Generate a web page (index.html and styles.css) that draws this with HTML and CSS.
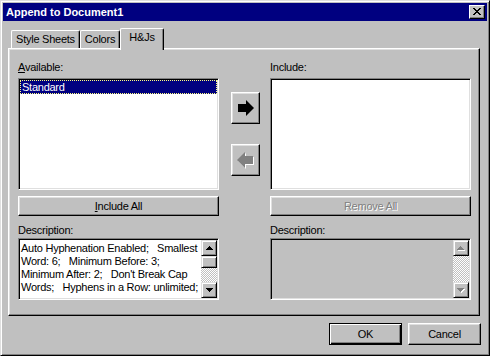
FILE: index.html
```html
<!DOCTYPE html>
<html lang="en">
<head>
    <meta charset="UTF-8">
    <title>Append to Document1</title>
    <link rel="stylesheet" href="styles.css">
</head>
<body>
<div class="window">
    <div class="titlebar">
        <span class="title">Append to Document1</span>
        <div class="close">
            <svg width="8" height="7" viewBox="0 0 8 7"><path fill="#000" d="M0 0h2v1H0zM6 0h2v1H6zM1 1h2v1H1zM5 1h2v1H5zM2 2h4v1H2zM3 3h2v1H3zM2 4h4v1H2zM1 5h2v1H1zM5 5h2v1H5zM0 6h2v1H0zM6 6h2v1H6z"/></svg>
        </div>
    </div>

    <div class="tabs">
        <div class="tab tab-styles">Style Sheets</div>
        <div class="tab tab-colors">Colors</div>
        <div class="tab tab-hj active">H&amp;Js</div>
    </div>

    <div class="panel">
        <div class="label"><u>A</u>vailable:</div>
        <div></div>
        <div class="label">Include:</div>

        <div class="listbox">
            <div class="item selected">Standard</div>
        </div>
        <div class="movers">
            <div class="btn mover">
                <svg width="16" height="16" viewBox="0 0 16 16"><polygon fill="#000" points="0,4 8,4 8,0 16,8 8,16 8,12 0,12"/></svg>
            </div>
            <div class="btn mover">
                <svg width="17" height="17" viewBox="0 0 17 17">
                    <polygon fill="#fff" points="17,5 9,5 9,1 1,9 9,17 9,13 17,13"/>
                    <polygon fill="#808080" points="16,4 8,4 8,0 0,8 8,16 8,12 16,12"/>
                </svg>
            </div>
        </div>
        <div class="listbox"></div>

        <div class="btn wide"><u>I</u>nclude All</div>
        <div></div>
        <div class="btn wide disabled">Remove All</div>

        <div class="label desc-label">Description:</div>
        <div></div>
        <div class="label desc-label">Description:</div>

        <div class="descbox">
            <div class="desctext">Auto Hyphenation Enabled;   Smallest
Word: 6;   Minimum Before: 3;
Minimum After: 2;   Don't Break Cap
Words;   Hyphens in a Row: unlimited;</div>
            <div class="scrollbar">
                <div class="sbtn">
                    <svg width="7" height="4" viewBox="0 0 7 4"><path fill="#000" d="M3 0h1v1H3zM2 1h3v1H2zM1 2h5v1H1zM0 3h7v1H0z"/></svg>
                </div>
                <div class="sbtn thumb"></div>
                <div class="track"></div>
                <div class="sbtn">
                    <svg width="7" height="4" viewBox="0 0 7 4"><path fill="#000" d="M0 0h7v1H0zM1 1h5v1H1zM2 2h3v1H2zM3 3h1v1H3z"/></svg>
                </div>
            </div>
        </div>
        <div></div>
        <div class="descbox disabled">
            <div class="desctext"></div>
            <div class="scrollbar">
                <div class="sbtn">
                    <svg width="8" height="5" viewBox="0 0 8 5"><path fill="#fff" d="M4 1h1v1H4zM3 2h3v1H3zM2 3h5v1H2zM1 4h7v1H1z"/><path fill="#808080" d="M3 0h1v1H3zM2 1h3v1H2zM1 2h5v1H1zM0 3h7v1H0z"/></svg>
                </div>
                <div class="track"></div>
                <div class="sbtn">
                    <svg width="8" height="5" viewBox="0 0 8 5"><path fill="#fff" d="M1 1h7v1H1zM2 2h5v1H2zM3 3h3v1H3zM4 4h1v1H4z"/><path fill="#808080" d="M0 0h7v1H0zM1 1h5v1H1zM2 2h3v1H2zM3 3h1v1H3z"/></svg>
                </div>
            </div>
        </div>
    </div>

    <div class="footer">
        <div class="btn action default">OK</div>
        <div class="btn action">Cancel</div>
    </div>
</div>
</body>
</html>
```

FILE: styles.css
```css
body{
    margin: 0;
    font-family: "Liberation Sans", Arial, sans-serif;
    font-size: 11px;
    letter-spacing: -0.25px;
    color: #000;
}
.window{
    width: 490px;
    height: 356px;
    box-sizing: border-box;
    background-color: #c0c0c0;
    border: 1px solid;
    border-color: #dfdfdf #000 #000 #dfdfdf;
    box-shadow: inset 1px 1px #fff, inset -1px -1px #808080;
    padding: 2px;
}
.titlebar{
    height: 18px;
    background-color: #000080;
    display: flex;
    align-items: center;
    justify-content: space-between;
    padding: 0 2px 0 3px;
}
.title{
    color: white;
    font-weight: bold;
    letter-spacing: 0;
}
.close{
    width: 16px;
    height: 14px;
    box-sizing: border-box;
    background-color: #c0c0c0;
    border: 1px solid;
    border-color: #fff #000 #000 #fff;
    box-shadow: inset -1px -1px #808080;
    display: flex;
    align-items: center;
    justify-content: center;
    padding: 0 1px 1px 0;
}

/* tabs */
.tabs{
    display: flex;
    align-items: flex-end;
    height: 20px;
    margin-top: 7px;
    padding-left: 8px;
}
.tab{
    height: 18px;
    box-sizing: border-box;
    border: 1px solid;
    border-color: #fff #000 transparent #fff;
    border-bottom: none;
    border-radius: 2px 2px 0 0;
    box-shadow: inset -1px 0 #808080;
    display: flex;
    align-items: center;
    justify-content: center;
    padding-bottom: 1px;
}
.tab-styles{ width: 69px; }
.tab-colors{ width: 40px; }
.tab-hj{ width: 44px; }
.tab.active{
    height: 22px;
    margin-bottom: -2px;
    position: relative;
    z-index: 1;
    background-color: #c0c0c0;
    padding-bottom: 5px;
}

/* panel */
.panel{
    height: 268px;
    box-sizing: border-box;
    margin: 0 7px 0 5px;
    border: 1px solid;
    border-color: #fff #000 #000 #fff;
    box-shadow: inset -1px -1px #808080, inset 1px 1px #dfdfdf;
    padding: 12px 8px 0 9px;
    display: grid;
    grid-template-columns: 201px 51px 201px;
    grid-template-rows: 17px 112px 26px 22px 62px;
}
.label{
    line-height: 13px;
}
.desc-label{
    padding-top: 8px;
}
.listbox, .descbox{
    box-sizing: border-box;
    background-color: white;
    border: 1px solid;
    border-color: #808080 #fff #fff #808080;
    box-shadow: inset 1px 1px #000, inset -1px -1px #dfdfdf;
    padding: 1px;
}
.item{
    height: 14px;
    box-sizing: border-box;
    line-height: 12px;
    padding-left: 1px;
}
.item.selected{
    background-color: #000080;
    color: white;
    border: 1px dotted #ffff80;
}
.movers{
    display: flex;
    flex-direction: column;
    gap: 20px;
    padding: 14px 0 0 12px;
}

/* buttons */
.btn{
    box-sizing: border-box;
    background-color: #c0c0c0;
    border: 1px solid;
    border-color: #fff #000 #000 #fff;
    box-shadow: inset -1px -1px #808080, inset 1px 1px #dfdfdf;
    display: flex;
    align-items: center;
    justify-content: center;
}
.mover{
    width: 29px;
    height: 32px;
}
.wide{
    margin-top: 6px;
    height: 20px;
}
.disabled{
    color: #808080;
    text-shadow: 1px 1px 0 #fff;
}
.footer{
    display: flex;
    justify-content: flex-end;
    gap: 6px;
    margin-top: 7px;
    padding-right: 6px;
}
.action{
    width: 73px;
    height: 22px;
}
.btn.default{
    border-color: #000;
    box-shadow: inset 1px 1px #fff, inset -1px -1px #000, inset -2px -2px #808080;
}

/* description */
.descbox{
    display: flex;
}
.descbox.disabled{
    background-color: #c0c0c0;
}
.desctext{
    flex: 1;
    white-space: pre;
    overflow: hidden;
    line-height: 13px;
    padding: 2px 0 0 1px;
}
.scrollbar{
    width: 16px;
    display: flex;
    flex-direction: column;
}
.sbtn{
    height: 16px;
    flex-shrink: 0;
    box-sizing: border-box;
    background-color: #c0c0c0;
    border: 1px solid;
    border-color: #dfdfdf #000 #000 #dfdfdf;
    box-shadow: inset 1px 1px #fff, inset -1px -1px #808080;
    display: flex;
    align-items: center;
    justify-content: center;
}
.sbtn.thumb{
    height: 12px;
}
.track{
    flex: 1;
    background: repeating-conic-gradient(#fff 0 25%, #c0c0c0 0 50%) 0 0 / 2px 2px;
}
```
